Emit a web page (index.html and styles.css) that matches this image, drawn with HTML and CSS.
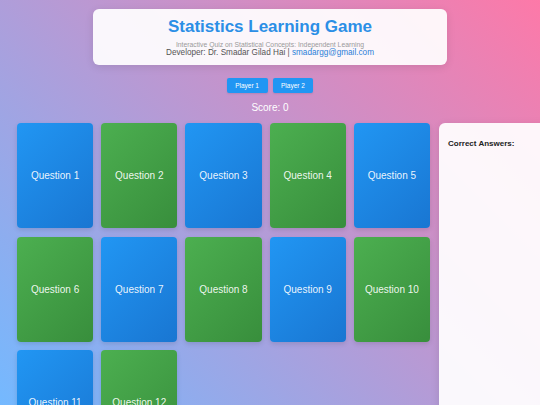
FILE: index.html
```html
<!DOCTYPE html>
<html lang="en">
<head>
<meta charset="utf-8">
<title>Statistics Learning Game</title>
<link rel="stylesheet" href="styles.css">
</head>
<body>
<div class="page">
  <header class="header">
    <h1 class="title">Statistics Learning Game</h1>
    <p class="subtitle">Interactive Quiz on Statistical Concepts: Independent Learning</p>
    <p class="dev">Developer: Dr. Smadar Gilad Hai | <a class="mail" href="#">smadargg@gmail.com</a></p>
  </header>
  <div class="players">
    <button class="player">Player 1</button>
    <button class="player">Player 2</button>
  </div>
  <div class="score">Score: 0</div>
  <main class="game">
    <div class="cards">
      <div class="card blue">Question 1</div>
      <div class="card green">Question 2</div>
      <div class="card blue">Question 3</div>
      <div class="card green">Question 4</div>
      <div class="card blue">Question 5</div>
      <div class="card green">Question 6</div>
      <div class="card blue">Question 7</div>
      <div class="card green">Question 8</div>
      <div class="card blue">Question 9</div>
      <div class="card green">Question 10</div>
      <div class="card blue">Question 11</div>
      <div class="card green">Question 12</div>
    </div>
    <aside class="panel">
      <h3 class="panel-title">Correct Answers:</h3>
    </aside>
  </main>
</div>
</body>
</html>
```

FILE: styles.css
```css
html, body {
  margin: 0;
  padding: 0;
  height: 100%;
}
body {
  font-family: "Liberation Sans", Arial, sans-serif;
  background: linear-gradient(45deg, #74b9ff, #fd79a8) fixed;
  overflow: hidden;
}
.page {
  padding: 9px 0 0 17px;
}
.header {
  width: 354px;
  box-sizing: border-box;
  margin: 0 0 0 76px;
  background: rgba(255, 255, 255, 0.92);
  border-radius: 6px;
  box-shadow: 0 2px 8px rgba(0, 0, 0, 0.1);
  padding: 7px 10px 7px;
  text-align: center;
}
.title {
  margin: 0 0 2px;
  font-size: 17px;
  line-height: 22px;
  font-weight: bold;
  color: #2b8fe6;
}
.subtitle {
  margin: 0;
  font-size: 6.8px;
  line-height: 9px;
  color: #9a9a9a;
}
.dev {
  margin: -1px 0 0;
  font-size: 8.2px;
  line-height: 10px;
  color: #555;
}
.mail {
  color: #2b7fd8;
  text-decoration: none;
}
.players {
  display: flex;
  justify-content: center;
  gap: 5px;
  margin: 13px 0 0 -17px;
}
.player {
  height: 15px;
  padding: 0 8.5px;
  border: none;
  border-radius: 2px;
  background: #2196f3;
  color: #fff;
  font-family: "Liberation Sans", Arial, sans-serif;
  font-size: 6.5px;
  box-shadow: 0 1px 2px rgba(0,0,0,0.1);
}
.score {
  margin: 9px 0 0 -17px;
  text-align: center;
  font-size: 10px;
  line-height: 12px;
  color: #fff;
}
.game {
  display: flex;
  gap: 9px;
  margin-top: 9px;
}
.cards {
  flex: 0 0 413px;
  display: grid;
  grid-template-columns: repeat(5, 1fr);
  grid-auto-rows: 105px;
  column-gap: 8px;
  row-gap: 8.5px;
}
.card {
  display: flex;
  align-items: center;
  justify-content: center;
  border-radius: 4px;
  color: rgba(255, 255, 255, 0.92);
  font-size: 10px;
  box-shadow: 0 2px 5px rgba(0, 0, 0, 0.12);
}
.blue {
  background: linear-gradient(135deg, #2196f3, #1976d2);
}
.green {
  background: linear-gradient(135deg, #4caf50, #388e3c);
}
.panel {
  flex: 0 0 160px;
  height: 400px;
  box-sizing: border-box;
  padding: 16px 9px;
  background: rgba(255, 255, 255, 0.93);
  border-radius: 6px;
  box-shadow: 0 2px 8px rgba(0, 0, 0, 0.1);
}
.panel-title {
  margin: 0;
  font-size: 8px;
  line-height: 10px;
  font-weight: bold;
  color: #222;
}
```
